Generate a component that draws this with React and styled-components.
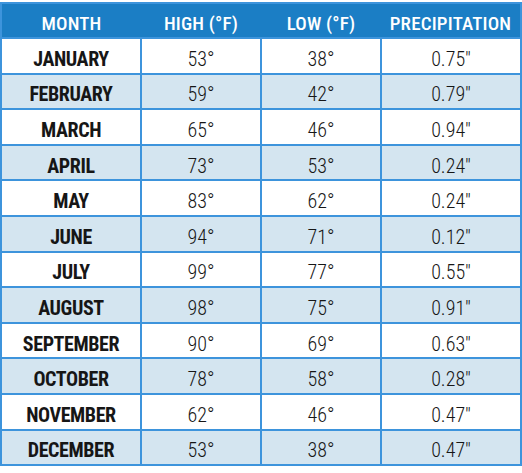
import React from "react";
import styled, { createGlobalStyle } from "styled-components";

const GlobalStyle = createGlobalStyle`
  html, body {
    margin: 0;
    padding: 0;
    background: #ffffff;
  }
  body {
    padding-top: 2px;
    font-family: "Roboto Condensed", Roboto, "DejaVu Sans Condensed", sans-serif;
    font-stretch: 75%;
  }
`;

const weather = [
  ["JANUARY", 53, 38, "0.75″"],
  ["FEBRUARY", 59, 42, "0.79″"],
  ["MARCH", 65, 46, "0.94″"],
  ["APRIL", 73, 53, "0.24″"],
  ["MAY", 83, 62, "0.24″"],
  ["JUNE", 94, 71, "0.12″"],
  ["JULY", 99, 77, "0.55″"],
  ["AUGUST", 98, 75, "0.91″"],
  ["SEPTEMBER", 90, 69, "0.63″"],
  ["OCTOBER", 78, 58, "0.28″"],
  ["NOVEMBER", 62, 46, "0.47″"],
  ["DECEMBER", 53, 38, "0.47″"],
];

const Table = styled.table`
  width: 522px;
  table-layout: fixed;
  border-collapse: collapse;
  border: 2px solid #3d94dc;
`;

const HeadRow = styled.tr`
  height: 35px;
  background: #1b7ec5;
`;

const HeadCell = styled.th`
  padding: 5px 0 0;
  color: #ffffff;
  font-size: 19px;
  font-weight: 500;
  letter-spacing: 0.2px;
  line-height: 1;
  text-align: center;
  border-bottom: 2px solid #3d94dc;
`;

const Row = styled.tr`
  height: 35.6px;
  background: ${(p) => (p.$striped ? "#d4e5f0" : "#ffffff")};
`;

const Cell = styled.td`
  padding: 6px 0 0;
  border: 2px solid #3d94dc;
  text-align: center;
  color: #161616;
  font-size: 20px;
  font-weight: ${(p) => (p.$month ? 700 : 300)};
  letter-spacing: ${(p) => (p.$month ? "-0.4px" : "0")};
  line-height: 1;
`;

export default function App() {
  return (
    <>
      <GlobalStyle />
      <Table>
        <colgroup>
          <col style={{ width: 140 }} />
          <col style={{ width: 120 }} />
          <col style={{ width: 120 }} />
          <col style={{ width: 140 }} />
        </colgroup>
        <thead>
          <HeadRow>
            <HeadCell>MONTH</HeadCell>
            <HeadCell>HIGH (°F)</HeadCell>
            <HeadCell>LOW (°F)</HeadCell>
            <HeadCell>PRECIPITATION</HeadCell>
          </HeadRow>
        </thead>
        <tbody>
          {weather.map(([month, high, low, rain], i) => (
            <Row key={month} $striped={i % 2 === 1}>
              <Cell $month>{month}</Cell>
              <Cell>{high}°</Cell>
              <Cell>{low}°</Cell>
              <Cell>{rain}</Cell>
            </Row>
          ))}
        </tbody>
      </Table>
    </>
  );
}
